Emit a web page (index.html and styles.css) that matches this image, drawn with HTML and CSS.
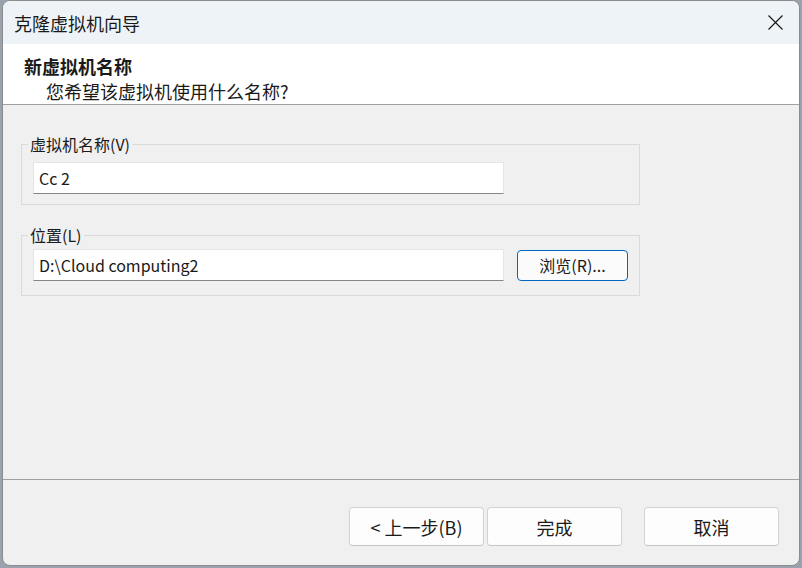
FILE: index.html
```html
<!DOCTYPE html>
<html lang="zh-CN">
  <head>
    <meta charset="UTF-8" />
    <title>克隆虚拟机向导</title>
    <link rel="stylesheet" href="styles.css">
  </head>
  <body>
    <div class="window">
      <!-- Title bar -->
      <div class="titlebar">
        <span class="title">克隆虚拟机向导</span>
        <svg class="close" width="15" height="15" viewBox="0 0 15 15">
          <path d="M0.5 0.5 L14.5 14.5 M14.5 0.5 L0.5 14.5" stroke="#1a1a1a" stroke-width="1.2" fill="none" />
        </svg>
      </div>

      <!-- Page header -->
      <div class="header">
        <div class="header-title">新虚拟机名称</div>
        <div class="header-sub">您希望该虚拟机使用什么名称?</div>
      </div>

      <!-- Form -->
      <div class="content">
        <fieldset class="group group-name">
          <legend>虚拟机名称(V)</legend>
          <input class="field" type="text" value="Cc 2">
        </fieldset>

        <fieldset class="group group-path">
          <legend>位置(L)</legend>
          <div class="row">
            <input class="field" type="text" value="D:\Cloud computing2">
            <button class="browse">浏览(R)...</button>
          </div>
        </fieldset>
      </div>

      <!-- Wizard buttons -->
      <div class="footer">
        <button class="btn">&lt; 上一步(B)</button>
        <button class="btn">完成</button>
        <button class="btn btn-cancel">取消</button>
      </div>
    </div>
  </body>
</html>
```

FILE: styles.css
```css
/* General styles */
* {
    box-sizing: border-box;
}

body {
    margin: 0;
    height: 568px;
    overflow: hidden;
    background: #9aa3ad;
    font-family: "Noto Sans CJK SC", "Noto Sans", sans-serif;
    font-size: 18px;
    color: #1a1a1a;
}

/* Dialog window */
.window {
    margin-left: 2px;
    width: 798px;
    height: 566px;
    border: 1px solid #8c8c8c;
    border-radius: 8px;
    overflow: hidden;
    background: #f0f0f0;
    display: flex;
    flex-direction: column;
}

/* Title bar */
.titlebar {
    height: 43px;
    flex: none;
    background: #eef3f8;
    display: flex;
    align-items: center;
    justify-content: space-between;
    padding: 0 16px 0 11px;
}

.title {
    line-height: 24px;
}

.close {
    display: block;
}

/* Header */
.header {
    flex: none;
    height: 61px;
    background: #fff;
    border-bottom: 1px solid #a0a0a0;
    padding: 10px 0 0 21px;
}

.header-title {
    font-weight: bold;
    line-height: 24px;
}

.header-sub {
    line-height: 24px;
    margin-top: 1px;
    padding-left: 22px;
}

/* Form area */
.content {
    flex: 1;
    padding: 29px 0 0 18px;
    font-size: 16px;
}

.group {
    width: 619px;
    margin: 0 0 20px;
    padding: 8px 0 10px 11px;
    border: 1px solid #dadada;
}

.group-path {
    padding-top: 4px;
    padding-bottom: 14px;
}

.group legend {
    margin-left: -5px;
    padding: 0 2px;
    line-height: 20px;
}

.row {
    display: flex;
    align-items: center;
    gap: 13px;
}

.field {
    display: block;
    width: 471px;
    height: 32px;
    margin: 0;
    padding: 0 0 0 5px;
    font: inherit;
    color: #1a1a1a;
    background: #fff;
    border: 1px solid #e6e6e6;
    border-bottom-color: #868686;
    outline: none;
}

.browse {
    width: 111px;
    height: 31px;
    margin: 0;
    padding: 0;
    font: inherit;
    color: #1a1a1a;
    background: #fbfbfb;
    border: 1px solid #0067c0;
    border-radius: 4px;
}

/* Footer with wizard buttons */
.footer {
    flex: none;
    height: 86px;
    border-top: 1px solid #a0a0a0;
    display: flex;
    justify-content: flex-end;
    align-items: flex-start;
    padding: 27px 20px 0 0;
    gap: 3px;
}

.btn {
    width: 135px;
    height: 39px;
    margin: 0;
    padding: 0;
    font: inherit;
    color: #1a1a1a;
    background: #fdfdfd;
    border: 1px solid #d3d3d3;
    border-bottom-color: #c4c4c4;
    border-radius: 4px;
}

.btn-cancel {
    margin-left: 19px;
}
```
